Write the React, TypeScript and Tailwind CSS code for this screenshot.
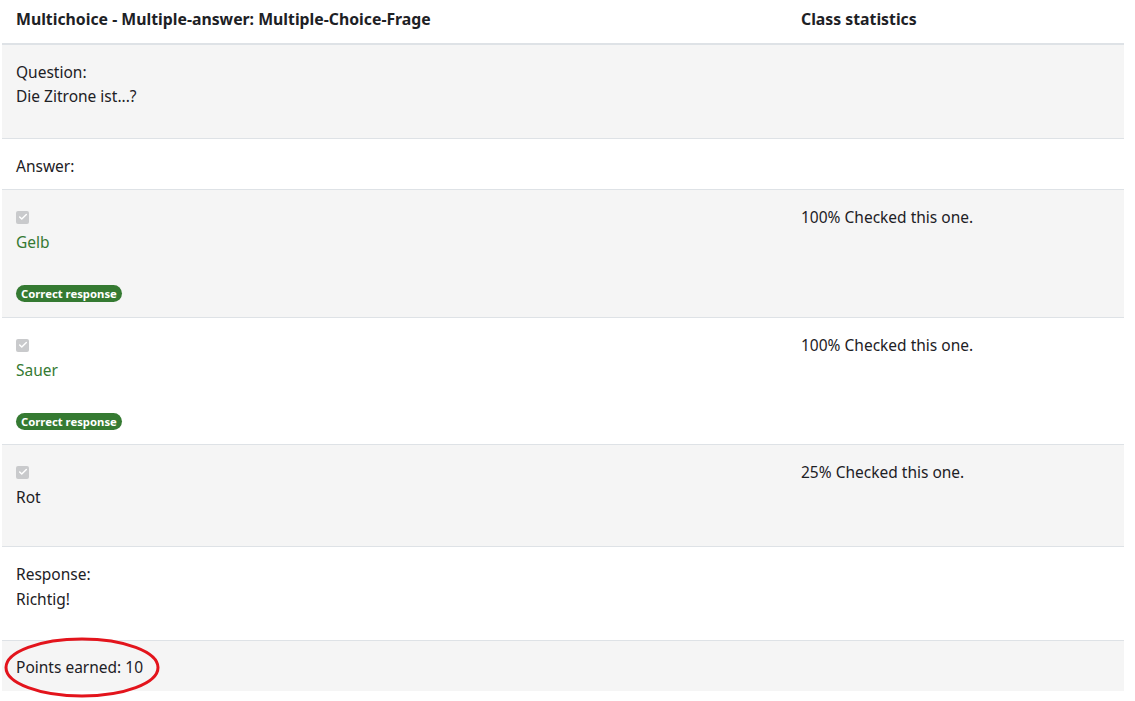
import { Check } from 'lucide-react'

const font = { fontFamily: '"Noto Sans", "Segoe UI", sans-serif' }

function Box() {
    return (
        <span className="inline-flex h-[13px] w-[13px] items-center justify-center rounded-[2px] bg-[#c9cacc]">
            <Check className="h-[10px] w-[10px] text-white" strokeWidth={3.5} />
        </span>
    )
}

function Badge() {
    return (
        <span className="inline-flex h-[17px] items-center rounded-full bg-[#357a32] px-[5px] text-[11.3px] font-bold leading-none text-white">
            Correct response
        </span>
    )
}

type Choice = { label: string; correct: boolean; stat: string; h: string }

const choices: Choice[] = [
    { label: 'Gelb', correct: true, stat: '100% Checked this one.', h: 'h-[128px]' },
    { label: 'Sauer', correct: true, stat: '100% Checked this one.', h: 'h-[127px]' },
    { label: 'Rot', correct: false, stat: '25% Checked this one.', h: 'h-[102px]' },
]

export default function App() {
    return (
        <div className="relative min-h-[701px] bg-white pl-[2px] text-[15.5px] leading-6 text-[#1d2125]" style={font}>
            <div className="w-[1122px]">
                {/* header */}
                <div className="flex h-[45px] border-b-2 border-[#dee2e6] text-[15.8px] font-bold">
                    <div className="w-[783px] px-[14px] pt-[7px]">Multichoice - Multiple-answer: Multiple-Choice-Frage</div>
                    <div className="flex-1 px-4 pt-[7px]">Class statistics</div>
                </div>

                <div className="h-[94px] border-b border-[#dee2e6] bg-[#f5f5f5] px-[14px] pt-[15px]">
                    <div>Question:</div>
                    <div>Die Zitrone ist...?</div>
                </div>

                <div className="h-[51px] border-b border-[#dee2e6] px-[14px] pt-[15px]">Answer:</div>

                {choices.map((c, i) => (
                    <div key={c.label} className={`flex border-b border-[#dee2e6] ${c.h} ${i % 2 === 0 ? 'bg-[#f5f5f5]' : 'bg-white'}`}>
                        <div className="w-[783px] px-[14px] pt-[14px]">
                            <div className="flex h-[26px] items-center"><Box /></div>
                            <div className={c.correct ? 'text-[#357a32]' : ''}>{c.label}</div>
                            {c.correct && <div className="mt-[31px] flex"><Badge /></div>}
                        </div>
                        <div className="flex-1 px-4 pt-[15px]">{c.stat}</div>
                    </div>
                ))}

                <div className="h-[94px] border-b border-[#dee2e6] px-[14px] pt-[15px] leading-[25px]">
                    <div>Response:</div>
                    <div>Richtig!</div>
                </div>

                <div className="h-[50px] bg-[#f5f5f5] px-[14px] pt-[14px]">Points earned: 10</div>
            </div>

            {/* red annotation */}
            <svg className="absolute left-[3px] top-[636px]" width="158" height="63" viewBox="0 0 158 63">
                <ellipse cx="79" cy="31.5" rx="76" ry="28.5" fill="none" stroke="#e3141c" strokeWidth="3" />
            </svg>
        </div>
    )
}
